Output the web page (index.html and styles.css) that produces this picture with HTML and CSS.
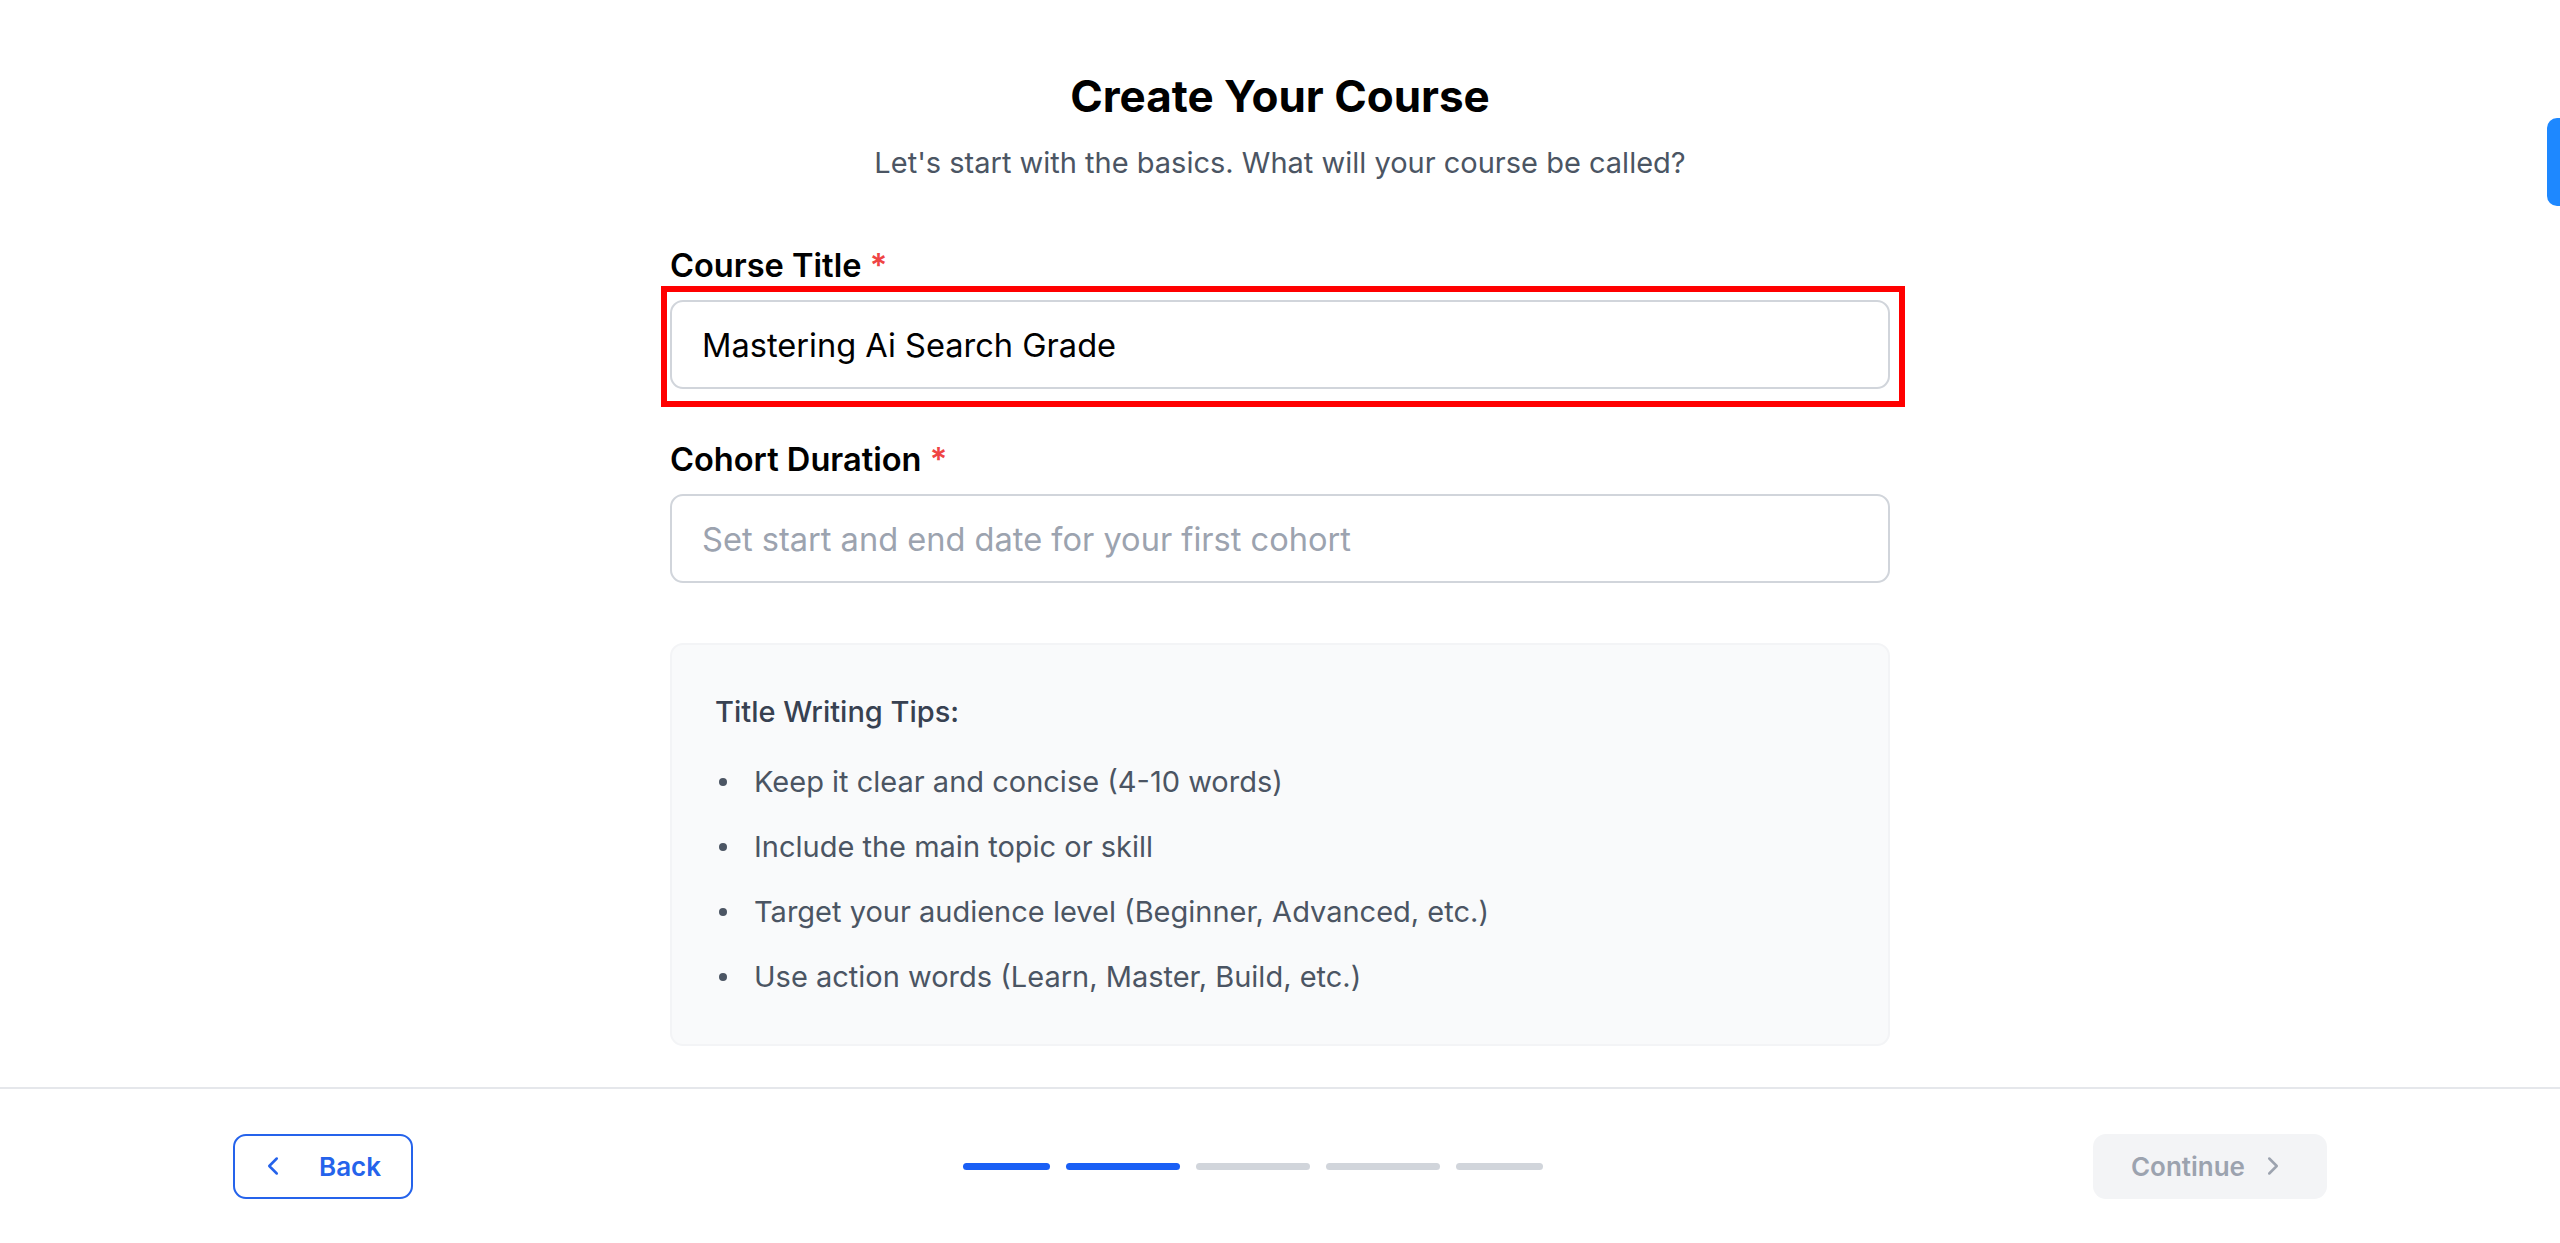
FILE: index.html
```html
<html>
<head>
  <title>Create Your Course</title>
  <link rel="stylesheet" href="styles.css">
</head>
<body>
  <div class="side-tab"></div>

  <main class="content">
    <div class="intro">
      <h1 class="title">Create Your Course</h1>
      <p class="subtitle">Let's start with the basics. What will your course be called?</p>
    </div>

    <div class="form">
      <div class="field">
        <label class="label">Course Title <span class="required">*</span></label>
        <div class="input-wrap">
          <input class="input" type="text" value="Mastering Ai Search Grade">
          <div class="highlight"></div>
        </div>
      </div>

      <div class="field">
        <label class="label">Cohort Duration <span class="required">*</span></label>
        <input class="input" type="text" placeholder="Set start and end date for your first cohort">
      </div>

      <div class="tips">
        <h3 class="tips-title">Title Writing Tips:</h3>
        <ul class="tips-list">
          <li>Keep it clear and concise (4-10 words)</li>
          <li>Include the main topic or skill</li>
          <li>Target your audience level (Beginner, Advanced, etc.)</li>
          <li>Use action words (Learn, Master, Build, etc.)</li>
        </ul>
      </div>
    </div>
  </main>

  <footer class="footer">
    <button class="btn btn-back">
      <svg class="icon" viewBox="0 0 24 24" fill="none" stroke="currentColor" stroke-width="2" stroke-linecap="round" stroke-linejoin="round"><polyline points="15 18 9 12 15 6"></polyline></svg>
      <span>Back</span>
    </button>

    <div class="progress">
      <span class="step step-short done"></span>
      <span class="step done"></span>
      <span class="step"></span>
      <span class="step"></span>
      <span class="step step-short"></span>
    </div>

    <button class="btn btn-continue" disabled>
      <span>Continue</span>
      <svg class="icon" viewBox="0 0 24 24" fill="none" stroke="currentColor" stroke-width="2" stroke-linecap="round" stroke-linejoin="round"><polyline points="9 18 15 12 9 6"></polyline></svg>
    </button>
  </footer>
</body>
</html>
```

FILE: styles.css
```css
* {
  box-sizing: border-box;
}

body {
  margin: 0;
  height: 100vh;
  display: flex;
  flex-direction: column;
  background-color: #ffffff;
  font-family: Inter, 'Noto Sans', sans-serif;
  color: #000000;
}

.side-tab {
  position: fixed;
  top: 118px;
  right: 0;
  width: 13px;
  height: 88px;
  background-color: #1e88ff;
  border-radius: 10px 0 0 10px;
}

.content {
  flex: 1;
  padding-top: 72px;
}

.intro {
  text-align: center;
}

.title {
  margin: 0;
  font-size: 44px;
  line-height: 48px;
  font-weight: 700;
}

.subtitle {
  margin: 23px 0 0;
  font-size: 29px;
  line-height: 40px;
  color: #4b5563;
}

.form {
  width: 1220px;
  margin: 62px auto 0;
}

.field {
  margin-bottom: 50px;
}

.label {
  display: block;
  font-size: 32.6px;
  line-height: 40px;
  font-weight: 600;
  margin-bottom: 15px;
}

.required {
  color: #ef4444;
}

.input-wrap {
  position: relative;
}

.input {
  display: block;
  width: 100%;
  height: 89px;
  padding: 0 30px;
  border: 2px solid #d1d5db;
  border-radius: 13px;
  font-family: inherit;
  font-size: 32.6px;
  color: #000000;
  outline: none;
}

.input::placeholder {
  color: #9ca3af;
}

.highlight {
  position: absolute;
  top: -14px;
  left: -9px;
  right: -15px;
  bottom: -18px;
  border: 6px solid #ff0000;
  pointer-events: none;
}

.tips {
  margin-top: 60px;
  padding: 49px 43px 49px;
  background-color: #f9fafb;
  border: 2px solid #f3f4f6;
  border-radius: 13px;
}

.tips-title {
  margin: 0 0 34px;
  font-size: 29px;
  line-height: 36px;
  font-weight: 500;
  color: #374151;
}

.tips-list {
  margin: 0;
  padding: 0;
  list-style: none;
  color: #4b5563;
  font-size: 29px;
  line-height: 36px;
}

.tips-list li {
  display: flex;
  align-items: center;
  gap: 27px;
  margin-bottom: 29px;
}

.tips-list li::before {
  content: "";
  width: 8px;
  height: 8px;
  margin-left: 4px;
  border-radius: 50%;
  background-color: #4b5563;
  flex-shrink: 0;
}

.tips-list li:last-child {
  margin-bottom: 0;
}

.footer {
  height: 156px;
  padding: 0 233px;
  border-top: 2px solid #e5e7eb;
  display: flex;
  align-items: center;
  justify-content: space-between;
}

.btn {
  height: 65px;
  display: flex;
  align-items: center;
  border-radius: 13px;
  font-family: inherit;
  font-size: 26px;
  font-weight: 600;
  cursor: pointer;
}

.icon {
  width: 30px;
  height: 30px;
}

.btn-back {
  padding: 0 30px 0 23px;
  gap: 31px;
  background-color: #ffffff;
  border: 2px solid #2563eb;
  color: #2563eb;
}

.btn-continue {
  padding: 0 39px 0 38px;
  gap: 13px;
  background-color: #f3f4f6;
  border: none;
  color: #9ca3af;
  cursor: not-allowed;
}

.progress {
  display: flex;
  gap: 16px;
}

.step {
  width: 114px;
  height: 7px;
  border-radius: 4px;
  background-color: #d1d5db;
}

.step-short {
  width: 87px;
}

.step.done {
  background-color: #1a5ff5;
}
```
